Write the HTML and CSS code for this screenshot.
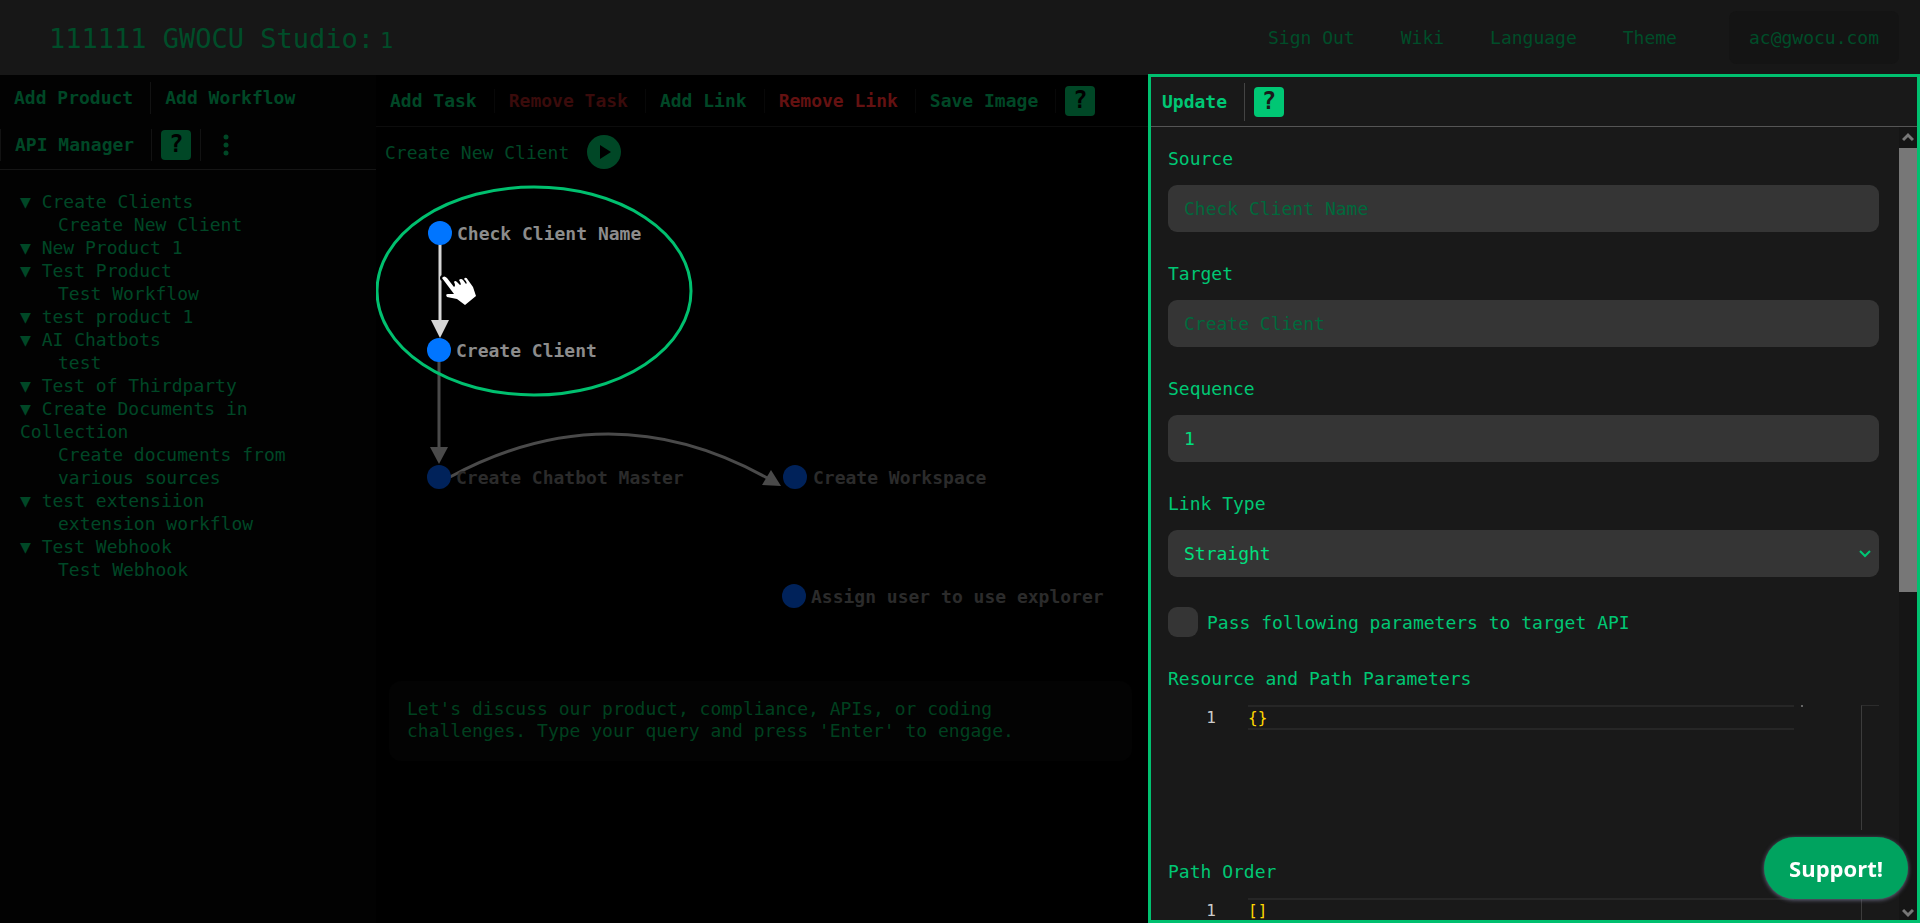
FILE: index.html
```html
<!DOCTYPE html>
<html lang="en">
<head>
  <meta charset="UTF-8">
  <meta name="viewport" content="width=device-width, initial-scale=1.0">
  <title>GWOCU Studio</title>
  <link rel="stylesheet" href="styles.css">
</head>
<body>
  <header class="header">
    <h1 class="brand">111111 GWOCU Studio:<span class="brand-version">1</span></h1>
    <nav class="nav">
      <a href="#">Sign Out</a>
      <a href="#">Wiki</a>
      <a href="#">Language</a>
      <a href="#">Theme</a>
      <a href="#" class="account">ac@gwocu.com</a>
    </nav>
  </header>

  <main class="workspace">
    <aside class="sidebar">
      <div class="sidebar-tools">
        <div class="tool-row">
          <button type="button" class="tool">Add Product</button>
          <span class="sep"></span>
          <button type="button" class="tool">Add Workflow</button>
        </div>
        <div class="tool-row">
          <span class="sep"></span>
          <button type="button" class="tool">API Manager</button>
          <span class="sep"></span>
          <button type="button" class="help">?</button>
          <span class="sep"></span>
          <button type="button" class="more" aria-label="More">
            <svg width="6" height="22" viewBox="0 0 6 22"><circle cx="3" cy="3" r="2.5"/><circle cx="3" cy="11" r="2.5"/><circle cx="3" cy="19" r="2.5"/></svg>
          </button>
        </div>
      </div>
      <ul class="tree">
        <li>▼ Create Clients
          <ul><li>Create New Client</li></ul>
        </li>
        <li>▼ New Product 1</li>
        <li>▼ Test Product
          <ul><li>Test Workflow</li></ul>
        </li>
        <li>▼ test product 1</li>
        <li>▼ AI Chatbots
          <ul><li>test</li></ul>
        </li>
        <li>▼ Test of Thirdparty</li>
        <li>▼ Create Documents in Collection
          <ul><li>Create documents from various sources</li></ul>
        </li>
        <li>▼ test extensiion
          <ul><li>extension workflow</li></ul>
        </li>
        <li>▼ Test Webhook
          <ul><li>Test Webhook</li></ul>
        </li>
      </ul>
    </aside>

    <section class="designer">
      <div class="toolbar">
        <button type="button" class="tool">Add Task</button>
        <span class="sep"></span>
        <button type="button" class="tool danger faded">Remove Task</button>
        <span class="sep"></span>
        <button type="button" class="tool">Add Link</button>
        <span class="sep"></span>
        <button type="button" class="tool danger">Remove Link</button>
        <span class="sep"></span>
        <button type="button" class="tool">Save Image</button>
        <span class="sep"></span>
        <button type="button" class="help">?</button>
      </div>
      <div class="flow-title">
        <h2>Create New Client</h2>
        <button type="button" class="play" aria-label="Run">
          <svg width="34" height="34" viewBox="0 0 34 34"><circle cx="17" cy="17" r="17"/><path class="play-arrow" d="M13 10 L24 17 L13 24 Z"/></svg>
        </button>
      </div>
      <svg class="flow" width="772" height="501" viewBox="376 180 772 501">
        <g class="link">
          <path d="M439 361 V450"/>
          <path class="head" d="M430 447 H448 L439 464 Z"/>
          <path d="M450 477 Q611 390 769 479"/>
          <path class="head" d="M771 470 L762 485 L781 486 Z"/>
        </g>
        <g class="link active">
          <path d="M440 244 V323"/>
          <path class="head" d="M431 320 H449 L440 338 Z"/>
        </g>
        <g class="node active">
          <circle cx="440" cy="233" r="12"/>
          <text x="457" y="240">Check Client Name</text>
          <circle cx="439" cy="350" r="12"/>
          <text x="456" y="357">Create Client</text>
        </g>
        <g class="node">
          <circle cx="439" cy="477" r="12"/>
          <text x="456" y="484">Create Chatbot Master</text>
          <circle cx="795" cy="477" r="12"/>
          <text x="813" y="484">Create Workspace</text>
          <circle cx="794" cy="596" r="12"/>
          <text x="811" y="603">Assign user to use explorer</text>
        </g>
        <ellipse class="focus-ring" cx="534" cy="291" rx="157" ry="104"/>
        <circle class="hand-tip" cx="443" cy="278" r="3"/>
        <path class="hand" d="M442 278 Q444 275 447 278 L454 287 Q456 286 454 282 Q455 280 457 282 L460 285 Q462 285 459 280 Q461 278 463 280 L466 284 Q468 283 464 279 Q466 276 468 280 L473 287 L476 296 L465 305 L457 299 L447 297 Q445 294 448 294 L454 294 Z"/>
      </svg>
      <textarea class="chat" rows="2" aria-label="Query" placeholder="Let's discuss our product, compliance, APIs, or coding challenges. Type your query and press 'Enter' to engage."></textarea>
    </section>

    <section class="panel">
      <div class="toolbar panel-toolbar">
        <button type="button" class="tool">Update</button>
        <span class="sep"></span>
        <button type="button" class="help">?</button>
      </div>
      <div class="panel-body">
        <form class="form">
          <div class="field">
            <label for="source">Source</label>
            <input type="text" id="source" value="Check Client Name" disabled>
          </div>
          <div class="field">
            <label for="target">Target</label>
            <input type="text" id="target" value="Create Client" disabled>
          </div>
          <div class="field">
            <label for="sequence">Sequence</label>
            <input type="text" id="sequence" value="1">
          </div>
          <div class="field">
            <label for="linkType">Link Type</label>
            <div class="select">
              <select id="linkType">
                <option>Straight</option>
                <option>Curved</option>
              </select>
              <svg class="chevron" width="12" height="8" viewBox="0 0 12 8"><path d="M1 1 L6 6 L11 1"/></svg>
            </div>
          </div>
          <div class="check">
            <input type="checkbox" id="pass">
            <label for="pass">Pass following parameters to target API</label>
          </div>
          <div class="field">
            <label for="resource">Resource and Path Parameters</label>
            <div class="editor">
              <span class="line-no">1</span>
              <textarea id="resource" class="code" rows="1" spellcheck="false">{}</textarea>
              <span class="minimap"></span>
              <span class="ruler"></span>
            </div>
          </div>
          <div class="field">
            <label for="order">Path Order</label>
            <div class="editor">
              <span class="line-no">1</span>
              <textarea id="order" class="code" rows="1" spellcheck="false">[]</textarea>
              <span class="ruler"></span>
            </div>
          </div>
        </form>
        <div class="scrollbar" aria-hidden="true">
          <svg width="12" height="21" viewBox="0 0 12 21"><path d="M1 13 L6 8 L11 13"/></svg>
          <span class="thumb"></span>
          <svg width="12" height="14" viewBox="0 0 12 14"><path d="M1 4 L6 9 L11 4"/></svg>
        </div>
      </div>
    </section>
  </main>

  <button type="button" class="support">Support!</button>
</body>
</html>
```

FILE: styles.css
```css
* {
  box-sizing: border-box;
}

body {
  margin: 0;
  height: 100vh;
  overflow: hidden;
  display: flex;
  flex-direction: column;
  background: #000;
  color: #004726;
  font-family: Consolas, "DejaVu Sans Mono", monospace;
  font-size: 18px;
  line-height: 23px;
}

button, input, select, textarea {
  font: inherit;
  color: inherit;
  border: none;
  background: none;
  margin: 0;
  padding: 0;
}

h1, h2, ul {
  margin: 0;
  padding: 0;
  font-weight: normal;
}

ul {
  list-style: none;
}

/* Header */
.header {
  flex: none;
  height: 75px;
  padding: 0 21px 0 49px;
  display: flex;
  align-items: center;
  justify-content: space-between;
  background: #171717;
  color: #004d29;
}

.brand {
  padding-top: 4px;
  font-size: 27px;
}

.brand-version {
  margin-left: 6px;
  font-size: 22px;
}

.nav {
  display: flex;
  align-items: center;
  gap: 46px;
}

.nav a {
  color: inherit;
  text-decoration: none;
}

.nav .account {
  margin-left: 6px;
  padding: 15px 20px;
  border-radius: 8px;
  background: #141414;
}

/* Columns */
.workspace {
  flex: 1;
  min-height: 0;
  display: grid;
  grid-template-columns: 376px 1fr 1fr;
}

.tool {
  padding: 0 17px 0 14px;
  font-weight: bold;
}

.sep {
  width: 1px;
  height: 32px;
  background: #121212;
}

.help {
  width: 30px;
  height: 30px;
  margin: 0 9px;
  border-radius: 4px;
  background: #004726;
  color: #000;
  font-size: 24px;
  font-weight: bold;
}

/* Sidebar */
.sidebar {
  background: #020202;
}

.sidebar-tools {
  border-bottom: 1px solid #151515;
}

.tool-row {
  height: 47px;
  padding-bottom: 2px;
  display: flex;
  align-items: center;
}

.more {
  display: flex;
  margin-left: 22px;
  fill: #004726;
}

.tree {
  padding: 20px;
}

.tree ul {
  padding-left: 38px;
}

/* Designer */
.designer {
  display: flex;
  flex-direction: column;
}

.toolbar {
  flex: none;
  height: 52px;
  display: flex;
  align-items: center;
  border-bottom: 1px solid #0c0c0c;
}

.designer .sep {
  height: 24px;
  background: #080808;
}

.danger {
  color: #641111;
}

.danger.faded {
  color: #3a0b0b;
}

.flow-title {
  height: 50px;
  padding-left: 9px;
  display: flex;
  align-items: center;
  gap: 18px;
}

.flow-title h2 {
  font-size: 18px;
}

.play {
  display: flex;
  fill: #004726;
}

.play-arrow {
  fill: #000;
}

.flow {
  flex: none;
  margin-top: 3px;
}

.link path {
  fill: none;
  stroke: #4a4a4a;
  stroke-width: 3;
}

.link .head {
  fill: #4a4a4a;
  stroke: none;
}

.link.active path {
  stroke: #d6d6d6;
}

.link.active .head {
  fill: #d6d6d6;
  stroke: none;
}

.node {
  fill: #00225a;
  font-weight: bold;
}

.node text {
  fill: #2b2b2b;
}

.node.active {
  fill: #0075ff;
}

.node.active text {
  fill: #8c8c8c;
}

.focus-ring {
  fill: none;
  stroke: #00c06f;
  stroke-width: 3;
}

.hand {
  fill: #fff;
}

.hand-tip {
  fill: #000;
}

.chat {
  display: block;
  height: 80px;
  margin: 0 16px 0 13px;
  padding: 17px 18px;
  border-radius: 12px;
  background: #030303;
  line-height: 22px;
  resize: none;
}

.chat::placeholder {
  color: #00401f;
  opacity: 1;
}

/* Link panel */
.panel {
  margin-top: -1px;
  min-height: 0;
  display: flex;
  flex-direction: column;
  overflow: hidden;
  border: 3px solid #00c06f;
  background: #191919;
  color: #00c774;
}

.panel-toolbar {
  height: 50px;
  border-color: #555;
}

.panel .tool {
  padding: 0 17px 0 11px;
}

.panel .sep {
  height: 38px;
  background: #444;
}

.panel .help {
  background: #00c774;
  color: #191919;
}

.panel-body {
  flex: 1;
  min-height: 0;
  display: flex;
}

.form {
  flex: 1;
  min-width: 0;
  padding: 20px 20px 0 17px;
  overflow: hidden;
}

.field {
  display: flex;
  flex-direction: column;
  gap: 15px;
  margin-bottom: 30px;
}

.field input,
.field select {
  width: 100%;
  height: 47px;
  padding: 0 16px;
  border-radius: 9px;
  background: #353535;
  color: #00e07f;
  appearance: none;
}

.field input:disabled {
  color: #00693c;
}

.select {
  position: relative;
}

.chevron {
  position: absolute;
  right: 8px;
  top: 20px;
  fill: none;
  stroke: #00c774;
  stroke-width: 2;
}

.check {
  display: flex;
  align-items: center;
  gap: 9px;
  margin-bottom: 30px;
}

.check input {
  width: 30px;
  height: 30px;
  border-radius: 9px;
  background: #353535;
  appearance: none;
}

.editor {
  height: 125px;
  display: flex;
  align-items: flex-start;
  font-size: 16px;
}

.line-no {
  width: 48px;
  text-align: right;
  line-height: 25px;
  color: #ccc;
}

.code {
  flex: 1;
  height: 25px;
  margin: 0 67px 0 32px;
  border: solid #262626;
  border-width: 2px 0;
  color: #ffd700;
  line-height: 21px;
  resize: none;
  overflow: hidden;
}

.minimap {
  width: 2px;
  height: 2px;
  margin: 0 58px 0 -60px;
  background: #666;
}

.ruler {
  width: 18px;
  height: 125px;
  border-top: 1px solid #2c2c2c;
  border-left: 1px solid #3c3c3c;
}

.scrollbar {
  width: 18px;
  display: flex;
  flex-direction: column;
  align-items: center;
  justify-content: space-between;
  background: #151515;
}

.scrollbar path {
  fill: none;
  stroke: #777;
  stroke-width: 3;
}

.scrollbar .thumb {
  width: 18px;
  height: 56%;
  margin-bottom: auto;
  background: #777;
}

.support {
  position: fixed;
  right: 12px;
  bottom: 24px;
  padding: 16px 25px;
  border-radius: 31px;
  background: #00a35f;
  box-shadow: 0 1px 4px #6b6b85;
  color: #fff;
  font-family: "Segoe UI", "Open Sans", sans-serif;
  font-size: 22px;
  font-weight: bold;
  line-height: 30px;
}
```
